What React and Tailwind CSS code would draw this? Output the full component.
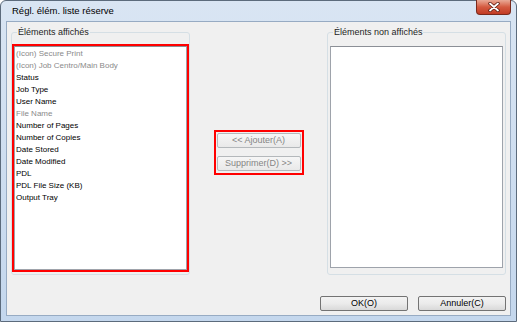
const SHOWN = [
  { label: '(Icon) Secure Print', muted: true },
  { label: '(Icon) Job Centro/Main Body', muted: true },
  { label: 'Status' },
  { label: 'Job Type' },
  { label: 'User Name' },
  { label: 'File Name', muted: true },
  { label: 'Number of Pages' },
  { label: 'Number of Copies' },
  { label: 'Date Stored' },
  { label: 'Date Modified' },
  { label: 'PDL' },
  { label: 'PDL File Size (KB)' },
  { label: 'Output Tray' },
]

const font = { fontFamily: '"Liberation Sans", Arial, sans-serif' }

function CloseButton(){
  return (
    <div className="w-[35px] h-[15px] rounded-b-[4px] border border-t-0 border-[#7a2a1c] bg-gradient-to-b from-[#e9a996] via-[#d45a40] to-[#c23b24] flex items-center justify-center">
      <svg width="12" height="10" viewBox="0 0 12 10">
        <path d="M2 1.5 L10 8.5 M10 1.5 L2 8.5" stroke="#5a1a10" strokeWidth="3.4" strokeLinecap="round" />
        <path d="M2 1.5 L10 8.5 M10 1.5 L2 8.5" stroke="#ffffff" strokeWidth="1.8" strokeLinecap="round" />
      </svg>
    </div>
  )
}

function Listbox({ items = [], className = '' }){
  return (
    <div className={`bg-white border border-[#9ea3ab] border-t-[#8b8f96] overflow-hidden ${className}`}>
      {items.map((it)=> (
        <div key={it.label} className={`h-[12px] leading-[12px] pl-[1px] text-[8px] whitespace-nowrap ${it.muted ? 'text-[#8a8a8a]' : 'text-black'}`}>
          {it.label}
        </div>
      ))}
    </div>
  )
}

function WinButton({ children, disabled, className = '' }){
  return (
    <button
      disabled={disabled}
      className={`h-[15px] rounded-[2px] border text-[9px] leading-[13px] whitespace-nowrap ${disabled
        ? 'border-[#b4b8bb] bg-gradient-to-b from-[#f6f6f6] to-[#e9e9e9] text-[#858585]'
        : 'border-[#737373] bg-gradient-to-b from-[#f3f3f3] via-[#ebebeb] to-[#d9d9d9] text-black'} ${className}`}
    >
      {children}
    </button>
  )
}

export default function App(){
  return (
    <div style={font} className="w-[517px] h-[322px] flex flex-col border border-[#5c6b7c] rounded-t-[6px] bg-gradient-to-b from-[#d9e5f3] to-[#c4d7ed] px-[5px] pb-[5px]">
      <div className="h-[20px] flex items-start justify-between">
        <span className="pl-[6px] pt-[4px] text-[9.5px] leading-[12px] text-black">Régl. élém. liste réserve</span>
        <div className="-mt-[1px]">
          <CloseButton />
        </div>
      </div>

      <div className="flex-1 border border-[#97abc3] bg-[#f0f0f0] px-[4px] pt-[5px] pb-[4px] flex flex-col">
        <div className="flex">
          <fieldset className="w-[179px] h-[248px] border border-[#d5dfe5] rounded-[3px]">
            <legend className="ml-[5px] px-[1px] text-[9px] leading-[11px] text-[#1e1e1e]">Éléments affichés</legend>
            <div className="mt-[6px] h-[228px] border-2 border-[#ff0000]">
              <Listbox items={SHOWN} className="h-full pt-[1px]" />
            </div>
          </fieldset>

          <div className="w-[137px] flex justify-center items-start">
            <div className="mt-[103px] border-2 border-[#ff0000] p-[1px] pb-[2px] flex flex-col gap-[8px]">
              <WinButton disabled className="w-[84px]">&lt;&lt;  Ajouter(A)</WinButton>
              <WinButton disabled className="w-[84px]">Supprimer(D) &gt;&gt;</WinButton>
            </div>
          </div>

          <fieldset className="w-[179px] h-[248px] border border-[#d5dfe5] rounded-[3px]">
            <legend className="ml-[5px] px-[1px] text-[9px] leading-[11px] text-[#1e1e1e]">Éléments non affichés</legend>
            <Listbox className="mt-[8px] mx-[2px] h-[222px]" />
          </fieldset>
        </div>

        <div className="mt-[21px] flex justify-end gap-[10px]">
          <WinButton className="w-[88px]">OK(O)</WinButton>
          <WinButton className="w-[88px]">Annuler(C)</WinButton>
        </div>
      </div>
    </div>
  )
}
